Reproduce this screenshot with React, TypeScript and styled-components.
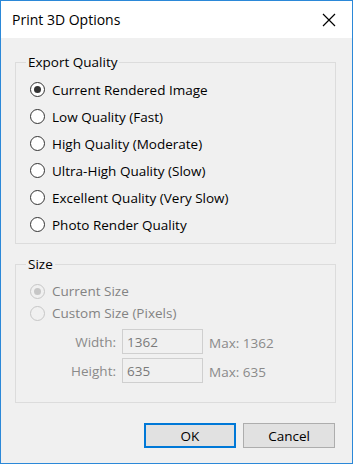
import styled, { createGlobalStyle } from "styled-components";

const GlobalStyle = createGlobalStyle`
  html, body {
    margin: 0;
    padding: 0;
    background: #ffffff;
  }
  * {
    box-sizing: border-box;
  }
`;

const Window = styled.div`
  width: 353px;
  height: 464px;
  border: 1px solid #2b88d8;
  display: flex;
  flex-direction: column;
  background: #f0f0f0;
  font-family: "Open Sans", "Noto Sans", sans-serif;
  font-size: 13.5px;
  color: #000;
`;

const TitleBar = styled.div`
  height: 37px;
  background: #ffffff;
  display: flex;
  align-items: center;
  justify-content: space-between;
  padding: 0 11px 0 11px;
  flex-shrink: 0;
`;

const Title = styled.span`
  font-size: 14px;
  color: #000;
`;

const CloseButton = styled.button`
  width: 24px;
  height: 24px;
  border: none;
  background: none;
  padding: 0;
  display: flex;
  align-items: center;
  justify-content: center;
`;

const Body = styled.div`
  flex: 1;
  display: flex;
  flex-direction: column;
  padding: 14px 16px 0 14px;
`;

const Group = styled.fieldset<{ $padTop: number; $padBottom: number }>`
  margin: 0;
  border: 1px solid #dcdcdc;
  padding: ${(p) => p.$padTop}px 10px ${(p) => p.$padBottom}px 14px;
  & + & {
    margin-top: 10px;
  }
`;

const Legend = styled.legend`
  padding: 0 2px;
  margin-left: -4px;
  font-size: 13.5px;
  line-height: 20px;
`;

const RadioRow = styled.label<{ $height: number; $disabled?: boolean }>`
  display: flex;
  align-items: center;
  gap: 7px;
  height: ${(p) => p.$height}px;
  color: ${(p) => (p.$disabled ? "#838383" : "#000")};
`;

const RadioCircle = styled.span<{ $checked?: boolean; $disabled?: boolean }>`
  width: 15px;
  height: 15px;
  border-radius: 50%;
  border: 1px solid ${(p) => (p.$disabled ? "#c6c6c6" : "#333")};
  background: ${(p) => (p.$disabled ? "#f0f0f0" : "#fff")};
  display: flex;
  align-items: center;
  justify-content: center;
  flex-shrink: 0;
  &::after {
    content: "";
    display: ${(p) => (p.$checked ? "block" : "none")};
    width: 7px;
    height: 7px;
    border-radius: 50%;
    background: ${(p) => (p.$disabled ? "#c6c6c6" : "#333")};
  }
`;

const DimRows = styled.div`
  display: flex;
  flex-direction: column;
  gap: 4px;
  margin-top: 5px;
`;

const DimRow = styled.div`
  display: flex;
  align-items: center;
  height: 25px;
  color: #8a8a8a;
`;

const DimLabel = styled.span`
  width: 86px;
  text-align: right;
  margin-right: 6px;
`;

const DimInput = styled.div`
  width: 81px;
  height: 25px;
  border: 1px solid #cfcfcf;
  background: #f0f0f0;
  display: flex;
  align-items: center;
  padding-left: 4px;
  color: #7a7a7a;
`;

const MaxText = styled.span`
  margin-left: 6px;
  color: #8a8a8a;
  padding-top: 3px;
`;

const ButtonBar = styled.div`
  display: flex;
  justify-content: flex-end;
  gap: 7px;
  margin-top: 20px;
  padding-right: 1px;
`;

const Button = styled.button<{ $primary?: boolean }>`
  width: 92px;
  height: 25px;
  font-family: inherit;
  font-size: 13.5px;
  color: #000;
  background: #e1e1e1;
  border: ${(p) => (p.$primary ? "2px solid #0078d7" : "1px solid #adadad")};
  padding: 0;
`;

const qualities = [
  "Current Rendered Image",
  "Low Quality (Fast)",
  "High Quality (Moderate)",
  "Ultra-High Quality (Slow)",
  "Excellent Quality (Very Slow)",
  "Photo Render Quality",
];

export default function App() {
  return (
    <>
      <GlobalStyle />
      <Window>
        <TitleBar>
          <Title>Print 3D Options</Title>
          <CloseButton aria-label="Close">
            <svg width="14" height="14" viewBox="0 0 14 14">
              <path d="M1 1L13 13M13 1L1 13" stroke="#000" strokeWidth="1.2" />
            </svg>
          </CloseButton>
        </TitleBar>
        <Body>
          <Group $padTop={4} $padBottom={5}>
            <Legend>Export Quality</Legend>
            {qualities.map((q, i) => (
              <RadioRow key={q} $height={27}>
                <RadioCircle $checked={i === 0} />
                {q}
              </RadioRow>
            ))}
          </Group>
          <Group $padTop={6} $padBottom={19}>
            <Legend>Size</Legend>
            <RadioRow $height={22} $disabled>
              <RadioCircle $checked $disabled />
              Current Size
            </RadioRow>
            <RadioRow $height={22} $disabled>
              <RadioCircle $disabled />
              Custom Size (Pixels)
            </RadioRow>
            <DimRows>
              <DimRow>
                <DimLabel>Width:</DimLabel>
                <DimInput>1362</DimInput>
                <MaxText>Max: 1362</MaxText>
              </DimRow>
              <DimRow>
                <DimLabel>Height:</DimLabel>
                <DimInput>635</DimInput>
                <MaxText>Max: 635</MaxText>
              </DimRow>
            </DimRows>
          </Group>
          <ButtonBar>
            <Button $primary>OK</Button>
            <Button>Cancel</Button>
          </ButtonBar>
        </Body>
      </Window>
    </>
  );
}
